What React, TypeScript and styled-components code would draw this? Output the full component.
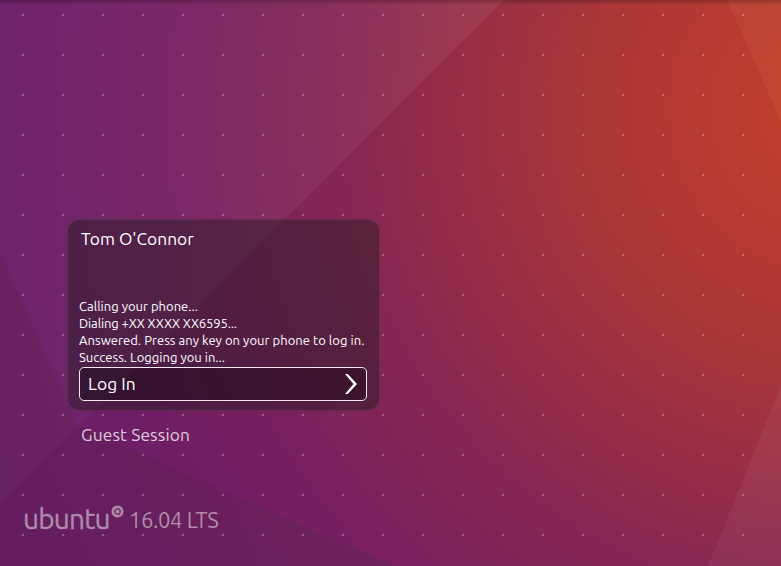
import React from "react";
import styled, { createGlobalStyle } from "styled-components";

const GlobalStyle = createGlobalStyle`
  *, *::before, *::after { box-sizing: border-box; }
  body {
    margin: 0;
    background: #651c5e;
    font-family: Ubuntu, "Noto Sans", "Open Sans", sans-serif;
    color: #fff;
  }
`;

const Screen = styled.main`
  display: grid;
  width: 781px;
  height: 566px;
  overflow: hidden;
  & > * { grid-area: 1 / 1; }
`;

const Greeter = styled.div`
  z-index: 1;
  display: flex;
  flex-direction: column;
  align-items: flex-start;
  padding-top: 219px;
`;

const Panel = styled.section`
  width: 313px;
  height: 192px;
  margin-left: 67px;
  padding: 7px 11px 9px;
  display: flex;
  flex-direction: column;
  border: 1px solid rgba(140, 115, 135, 0.2);
  border-radius: 13px;
  background: rgba(28, 27, 26, 0.42);
`;

const UserName = styled.h1`
  margin: 0 0 0 2px;
  font-size: 17.33px;
  font-weight: 400;
  line-height: 24px;
  letter-spacing: 0.05px;
  white-space: nowrap;
`;

const Messages = styled.div`
  margin-top: auto;
`;

const Message = styled.p<{ $tracking: number }>`
  margin: 0;
  font-size: 13px;
  line-height: 17px;
  letter-spacing: ${(p) => p.$tracking}px;
  white-space: nowrap;
`;

const LoginButton = styled.button`
  flex: none;
  display: flex;
  align-items: center;
  justify-content: space-between;
  width: 288px;
  height: 34px;
  margin-top: 1px;
  padding: 0 9px 0 8px;
  border: 1px solid #f3eaf0;
  border-radius: 5px;
  background: rgba(0, 0, 0, 0.3);
  color: #fff;
  font: inherit;
  font-size: 17.33px;
`;

const ButtonLabel = styled.span`
  padding-bottom: 2px;
  letter-spacing: 0.1px;
`;

const GuestSession = styled.div`
  margin: 12px 0 0 81px;
  font-size: 17.33px;
  line-height: 24px;
  letter-spacing: 0.15px;
  color: rgba(255, 255, 255, 0.78);
  white-space: nowrap;
`;

const Brand = styled.div`
  display: flex;
  align-items: flex-start;
  margin: 54px 0 0 23px;
  color: #b08cab;
  line-height: 36px;
  white-space: nowrap;
`;

const Wordmark = styled.span`
  width: 88px;
  font-size: 28px;
  font-weight: 400;
  letter-spacing: -0.75px;
  line-height: 35px;
  -webkit-text-stroke: 0.3px #b08cab;
`;

const Release = styled.span`
  margin-left: 5px;
  padding-top: 1px;
  font-size: 22px;
  letter-spacing: -0.4px;
`;

const Roundel = styled.svg`
  flex: none;
  margin-top: 4px;
`;

const Wallpaper = () => (
  <svg width="781" height="566" viewBox="0 0 781 566" aria-hidden="true">
    <defs>
      <radialGradient id="glow" gradientUnits="userSpaceOnUse" cx="830" cy="110" r="900">
        <stop offset="0" stopColor="#c0402b" />
        <stop offset="0.07" stopColor="#bc3e2c" />
        <stop offset="0.16" stopColor="#b53a31" />
        <stop offset="0.27" stopColor="#aa3638" />
        <stop offset="0.37" stopColor="#9d3142" />
        <stop offset="0.46" stopColor="#912b4a" />
        <stop offset="0.53" stopColor="#882651" />
        <stop offset="0.61" stopColor="#802458" />
        <stop offset="0.72" stopColor="#781f60" />
        <stop offset="0.85" stopColor="#6e1e65" />
        <stop offset="1" stopColor="#6a1e6a" />
      </radialGradient>
      <linearGradient id="sheet" gradientUnits="userSpaceOnUse" x1="0" y1="0" x2="500" y2="0">
        <stop offset="0" stopColor="#fff" stopOpacity="0.025" />
        <stop offset="1" stopColor="#fff" stopOpacity="0.06" />
      </linearGradient>
      <linearGradient id="fold" gradientUnits="userSpaceOnUse" x1="60" y1="566" x2="395" y2="500">
        <stop offset="0" stopColor="#5a1c44" stopOpacity="0.25" />
        <stop offset="1" stopColor="#502c48" stopOpacity="0.25" />
      </linearGradient>
      <linearGradient id="edge" x1="0" y1="0" x2="0" y2="1">
        <stop offset="0" stopColor="#000" stopOpacity="0.22" />
        <stop offset="1" stopColor="#000" stopOpacity="0" />
      </linearGradient>
      <pattern id="dots" width="40" height="40" patternUnits="userSpaceOnUse">
        <rect x="22" y="14" width="2" height="2" fill="#fff" fillOpacity="0.27" />
      </pattern>
    </defs>
    <rect width="781" height="566" fill="url(#glow)" />
    <path d="M0 0H503.500L0 504Z" fill="url(#sheet)" />
    <path d="M0 252L78 426L395 566H0Z" fill="url(#fold)" />
    <path d="M727 0H781V121Z" fill="#e08850" fillOpacity="0.12" />
    <path d="M781 385V566H708Z" fill="#fff" fillOpacity="0.05" />
    {/* The grid is left out beneath the login panel. */}
    <path d="M0 0H781V566H0ZM67 219V411H380V219Z" fillRule="evenodd" fill="url(#dots)" />
    <rect width="781" height="5" fill="url(#edge)" />
  </svg>
);

const Chevron = () => (
  <svg width="12" height="20" viewBox="0 0 12 20" aria-hidden="true">
    <path d="M0 0H2.800L12 10L2.800 20H0L8.500 10Z" fill="#fff" />
  </svg>
);

const CircleOfFriends = () => (
  <Roundel width="13" height="13" viewBox="0 0 13 13" aria-hidden="true">
    <circle cx="6.500" cy="6.500" r="6" fill="#b08cab" />
    <circle cx="6.500" cy="6.500" r="2.700" fill="none" stroke="#6a2060" strokeWidth="1.300" />
    <circle cx="3.500" cy="6.500" r="1" fill="#6a2060" stroke="#b08cab" strokeWidth=".4" />
    <circle cx="8.100" cy="3.800" r="1" fill="#6a2060" stroke="#b08cab" strokeWidth=".4" />
    <circle cx="8.100" cy="9.200" r="1" fill="#6a2060" stroke="#b08cab" strokeWidth=".4" />
  </Roundel>
);

const messages = [
  { text: "Calling your phone...", tracking: 0.02 },
  { text: "Dialing +XX XXXX XX6595...", tracking: -0.12 },
  { text: "Answered. Press any key on your phone to log in.", tracking: 0.05 },
  { text: "Success. Logging you in...", tracking: 0.02 },
];

export default function App() {
  return (
    <>
      <GlobalStyle />
      <Screen>
        <Wallpaper />
        <Greeter>
          <Panel>
            <UserName>Tom O'Connor</UserName>
            <Messages>
              {messages.map((m) => (
                <Message key={m.text} $tracking={m.tracking}>{m.text}</Message>
              ))}
            </Messages>
            <LoginButton type="button">
              <ButtonLabel>Log In</ButtonLabel>
              <Chevron />
            </LoginButton>
          </Panel>
          <GuestSession>Guest Session</GuestSession>
          <Brand>
            <Wordmark>ubuntu</Wordmark>
            <CircleOfFriends />
            <Release>16.04 LTS</Release>
          </Brand>
        </Greeter>
      </Screen>
    </>
  );
}
